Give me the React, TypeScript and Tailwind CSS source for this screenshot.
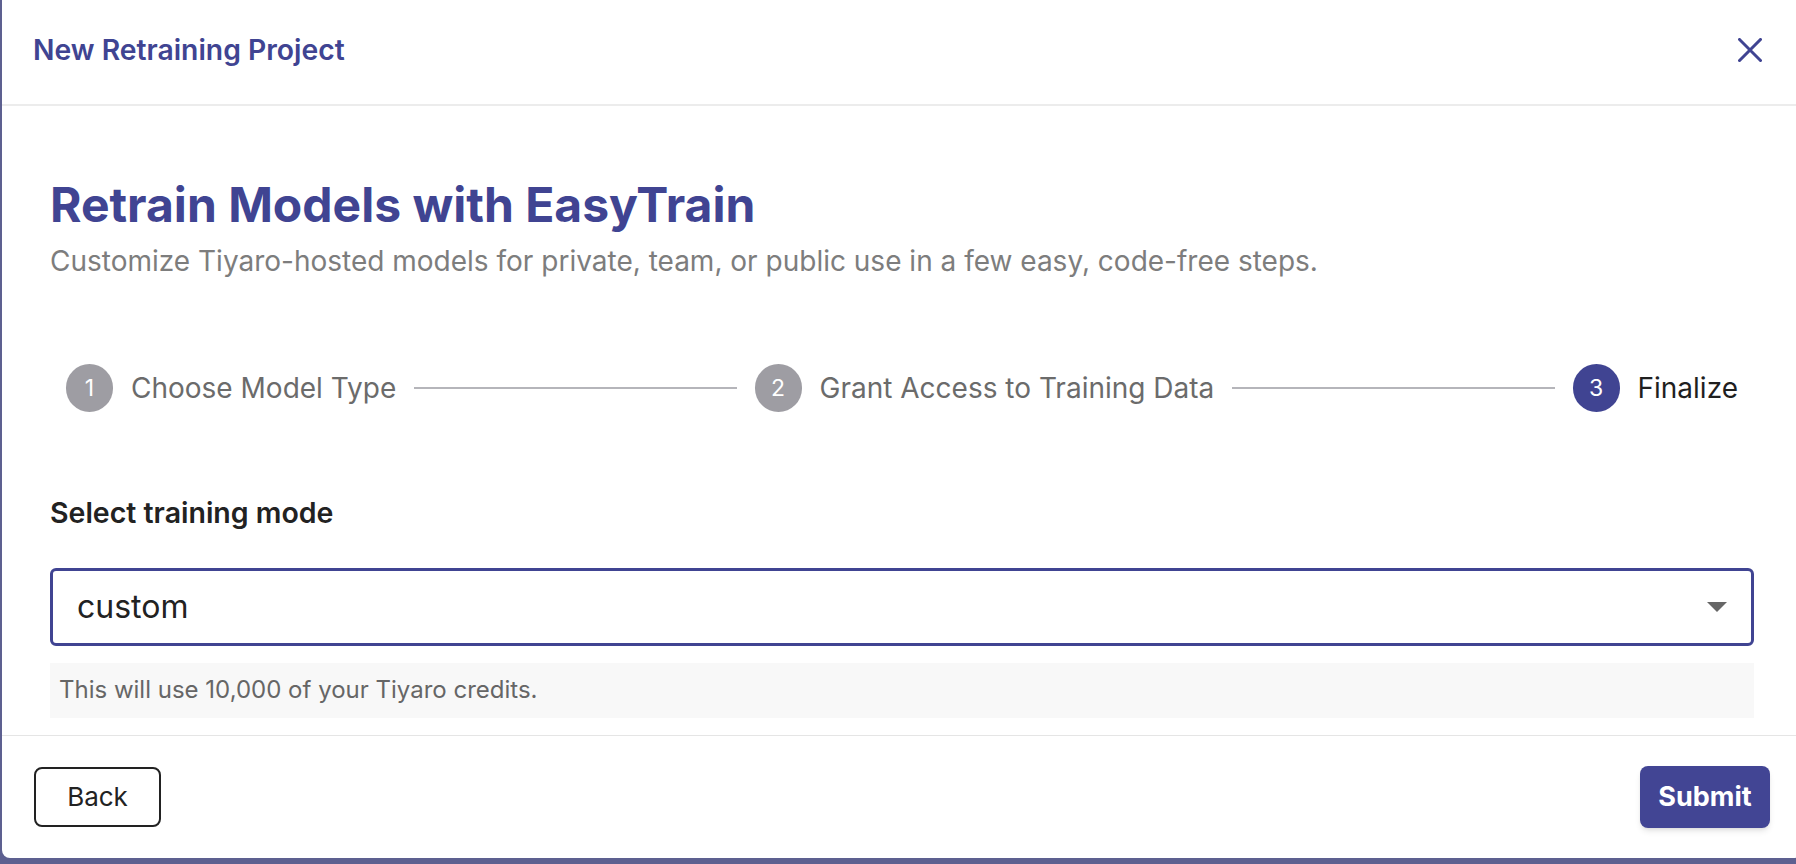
import { Fragment } from 'react'

const steps = [
  { n: 1, label: 'Choose Model Type', active: false },
  { n: 2, label: 'Grant Access to Training Data', active: false },
  { n: 3, label: 'Finalize', active: true },
]

function CloseIcon() {
  return (
    <svg width="24" height="24" viewBox="0 0 24 24" fill="none">
      <path d="M1.5 1.5 L22.5 22.5 M22.5 1.5 L1.5 22.5" stroke="#404492" strokeWidth="3" strokeLinecap="square" />
    </svg>
  )
}

export default function App() {
  return (
    <div className="h-[864px] w-full overflow-hidden bg-[#5d6090] [font-family:Inter,sans-serif]">
      <div className="ml-[2px] flex h-[858px] w-[1800px] flex-col rounded-b-[8px] bg-white">
        {/* Header */}
        <div className="flex h-[106px] shrink-0 items-center justify-between border-b-2 border-[#ececec] pb-[4px] pl-[31px] pr-[32px]">
          <h2 className="text-[28.3px] font-semibold leading-none text-[#404492]">New Retraining Project</h2>
          <button className="p-[8px]">
            <CloseIcon />
          </button>
        </div>

        {/* Body */}
        <div className="flex flex-col px-[48px] pt-[75px] pb-[17px]">
          <h1 className="text-[48px] font-bold leading-none text-[#404492]">Retrain Models with EasyTrain</h1>
          <p className="mt-[18px] text-[28px] leading-none text-[#7d7d7d]">
            Customize Tiyaro-hosted models for private, team, or public use in a few easy, code-free steps.
          </p>

          {/* Stepper */}
          <div className="mt-[89px] flex items-center gap-[18px] px-[16px]">
            {steps.map((s, i) => (
              <Fragment key={s.n}>
                <div className="flex items-center gap-[18px]">
                  <div
                    className={
                      s.active
                        ? 'flex h-[48px] w-[47px] items-center justify-center rounded-full bg-[#404492] text-[23px] text-white'
                        : 'flex h-[48px] w-[47px] items-center justify-center rounded-full bg-[#9e9da3] text-[23px] text-white'
                    }
                  >
                    {s.n}
                  </div>
                  <span className={s.active ? 'text-[28px] text-[#1f1f1f]' : 'text-[28px] text-[#6b6b6b]'}>{s.label}</span>
                </div>
                {i < steps.length - 1 && <div className="h-[2px] flex-1 bg-[#b5b5ba]" />}
              </Fragment>
            ))}
          </div>

          {/* Training mode */}
          <label className="mt-[87px] text-[28.5px] font-semibold leading-none text-[#222]">Select training mode</label>
          <div className="mt-[40px] flex h-[78px] items-center justify-between rounded-[6px] border-[3px] border-[#404492] pl-[24px] pr-[24px]">
            <span className="text-[32px] text-[#222]">custom</span>
            <svg width="20" height="10" viewBox="0 0 20 10">
              <path d="M0 0 L20 0 L10 10 Z" fill="#666" />
            </svg>
          </div>
          <div className="mt-[17px] flex h-[55px] items-center bg-[#f8f8f8] px-[9px] text-[24px] text-[#666]">
            This will use 10,000 of your Tiyaro credits.
          </div>
        </div>

        {/* Footer */}
        <div className="flex flex-1 items-center justify-between border-t border-[#e5e5e5] px-[32px]">
          <button className="h-[60px] w-[127px] rounded-[8px] border-2 border-[#222] text-[26px] text-[#222]">Back</button>
          <button className="h-[62px] w-[130px] rounded-[8px] bg-[#424594] text-[27px] font-bold text-white shadow-md">
            Submit
          </button>
        </div>
      </div>
    </div>
  )
}
